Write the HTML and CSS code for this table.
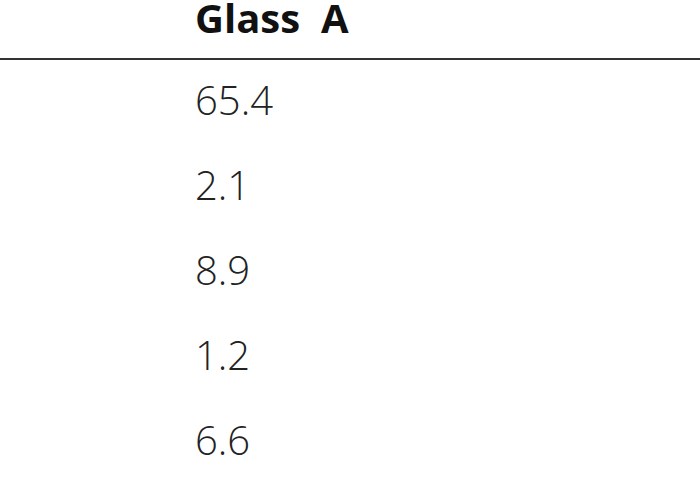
FILE: index.html
```html
<!DOCTYPE html>
<html>
<head>
<meta charset="utf-8">
<link rel="stylesheet" href="styles.css">
</head>
<body>
<div class="table">
  <div class="head"><span class="cell">Glass&nbsp; A</span></div>
  <div class="row"><span class="cell">65.4</span></div>
  <div class="row"><span class="cell">2.1</span></div>
  <div class="row"><span class="cell">8.9</span></div>
  <div class="row"><span class="cell">1.2</span></div>
  <div class="row"><span class="cell">6.6</span></div>
</div>
</body>
</html>
```
FILE: styles.css
```css
html, body {
  margin: 0;
  padding: 0;
  background: #fff;
}
body {
  width: 700px;
  height: 500px;
  overflow: hidden;
  font-family: "Open Sans", "DejaVu Sans", sans-serif;
  font-size: 40px;
  color: #222;
}
.table {
  display: flex;
  flex-direction: column;
}
.head {
  height: 58px;
  box-sizing: content-box;
  display: flex;
  align-items: flex-end;
  padding-left: 195px;
  border-bottom: 2px solid #333;
}
.head .cell {
  font-weight: 700;
  line-height: 40px;
  padding-bottom: 20px;
  color: #111;
}
.row {
  height: 85px;
  box-sizing: border-box;
  padding-left: 195px;
  padding-bottom: 6px;
  line-height: 79px;
  font-weight: 300;
}
```
